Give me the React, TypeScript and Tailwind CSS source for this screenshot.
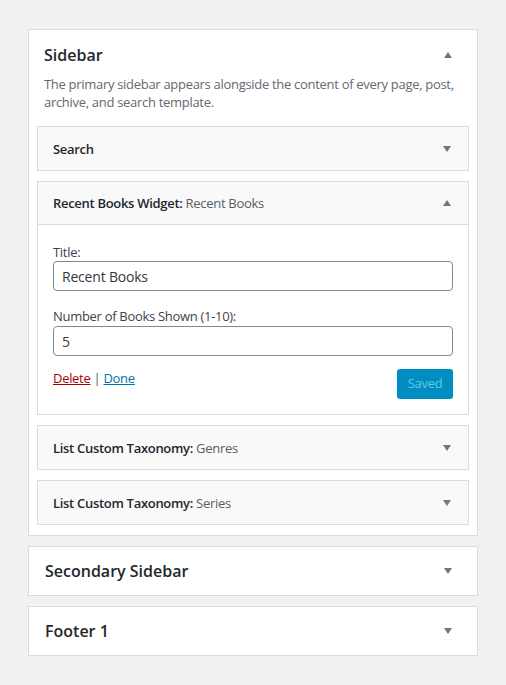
import React from 'react';

const font = { fontFamily: '"Open Sans", "Liberation Sans", sans-serif' };

const Arrow = ({ up }: { up?: boolean }) => (
    <svg width="8" height="6" viewBox="0 0 8 6" className="block">
        {up ? <polygon points="4,0 8,6 0,6" fill="#72777c" /> : <polygon points="0,0 8,0 4,6" fill="#72777c" />}
    </svg>
);

const WidgetHeader = ({ name, title, open }: { name: string; title?: string; open?: boolean }) => (
    <div className={`flex items-center justify-between h-[43px] bg-[#f9f9f9] pl-[15px] pr-[17px] ${open ? 'border-b border-[#dcdcde]' : ''}`}>
        <h3 className="text-[13px] leading-[18px] font-semibold tracking-[-0.3px] text-[#23282d]">
            {name}
            {title && <span className="font-normal text-[#555d66]">{title}</span>}
        </h3>
        <Arrow up={open} />
    </div>
);

const Widget = ({ name, title }: { name: string; title?: string }) => (
    <div className="border border-[#dcdcde] bg-[#f9f9f9]">
        <WidgetHeader name={name} title={title} />
    </div>
);

const SidebarBox = ({ label }: { label: string }) => (
    <div className="border border-[#dcdcde] bg-white h-[50px] flex items-center justify-between pl-[16px] pr-[25px]">
        <h2 className="text-[16px] leading-[24px] font-semibold text-[#23282d]">{label}</h2>
        <Arrow />
    </div>
);

export default function App() {
    return (
        <div className="min-h-screen bg-[#f1f1f1] pt-[29px] pl-[28px]" style={font}>
            <div className="w-[450px] flex flex-col gap-[10px]">
                <div className="border border-[#dcdcde] bg-white">
                    <div className="pt-[13px] pl-[15px] pr-[20px] pb-[15px]">
                        <div className="flex items-center justify-between pr-[5px]">
                            <h2 className="text-[16px] leading-[24px] font-semibold text-[#23282d]">Sidebar</h2>
                            <Arrow up />
                        </div>
                        <p className="mt-[8px] text-[13px] leading-[18px] tracking-[-0.3px] text-[#646970]">
                            The primary sidebar appears alongside the content of every page, post, archive, and search template.
                        </p>
                    </div>
                    <div className="px-[8px] pb-[10px] flex flex-col gap-[10px]">
                        <Widget name="Search" />
                        <div className="border border-[#dcdcde] bg-white">
                            <WidgetHeader name="Recent Books Widget: " title="Recent Books" open />
                            <div className="px-[15px] pt-[18px] pb-[15px] tracking-[-0.3px]">
                                <label className="block text-[13px] leading-[18px] text-[#3c434a]">Title:</label>
                                <input
                                    className="block w-full h-[30px] border border-[#7e8993] rounded-[4px] px-[8px] text-[14px] text-[#32373c] outline-none tracking-[-0.2px]"
                                    defaultValue="Recent Books"
                                />
                                <label className="block mt-[16px] text-[13px] leading-[18px] text-[#3c434a]">Number of Books Shown (1-10):</label>
                                <input
                                    className="block w-full mt-[1px] h-[30px] border border-[#7e8993] rounded-[4px] px-[8px] text-[14px] text-[#32373c] outline-none"
                                    defaultValue="5"
                                />
                                <div className="mt-[13px] flex items-start justify-between">
                                    <div className="text-[13px] leading-[18px] text-[#555d66]">
                                        <a className="text-[#a00] underline cursor-pointer">Delete</a>
                                        {' | '}
                                        <a className="text-[#0073aa] underline cursor-pointer">Done</a>
                                    </div>
                                    <button className="h-[30px] w-[56px] rounded-[3px] bg-[#008ec2] text-[#66c6e4] text-[13px]">Saved</button>
                                </div>
                            </div>
                        </div>
                        <Widget name="List Custom Taxonomy: " title="Genres" />
                        <Widget name="List Custom Taxonomy: " title="Series" />
                    </div>
                </div>
                <SidebarBox label="Secondary Sidebar" />
                <SidebarBox label="Footer 1" />
            </div>
        </div>
    );
}
